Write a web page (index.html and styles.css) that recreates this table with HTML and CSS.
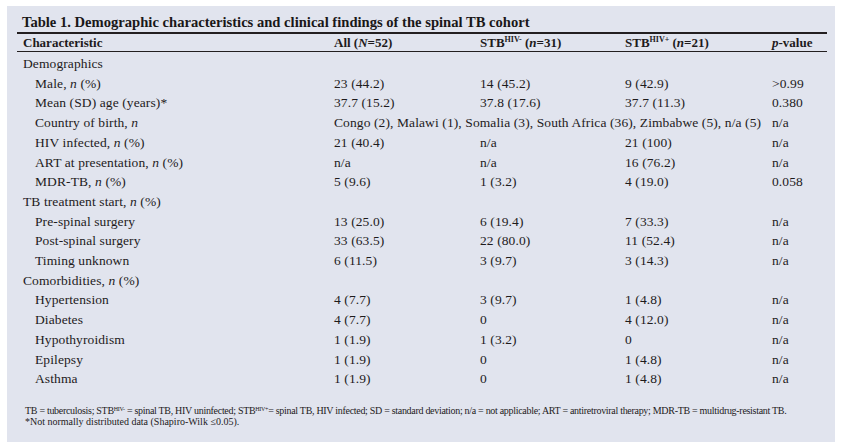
FILE: index.html
```html
<!DOCTYPE html>
<html lang="en">
<head>
<meta charset="utf-8">
<title>Table 1</title>
<link rel="stylesheet" href="styles.css">
</head>
<body>
<div class="panel">
  <div class="title">Table 1. Demographic characteristics and clinical findings of the spinal TB cohort</div>
  <table class="tbl">
    <colgroup>
      <col class="c1"><col class="c2"><col class="c3"><col class="c4"><col class="c5">
    </colgroup>
    <thead>
      <tr>
        <th>Characteristic</th>
        <th>All (<i>N</i>=52)</th>
        <th>STB<sup>HIV-</sup> (<i>n</i>=31)</th>
        <th>STB<sup>HIV+</sup> (<i>n</i>=21)</th>
        <th><i>p</i>-value</th>
      </tr>
    </thead>
    <tbody>
      <tr class="first"><td class="grp">Demographics</td><td></td><td></td><td></td><td></td></tr>
      <tr><td class="sub">Male, <i>n</i> (%)</td><td>23 (44.2)</td><td>14 (45.2)</td><td>9 (42.9)</td><td>&gt;0.99</td></tr>
      <tr><td class="sub">Mean (SD) age (years)*</td><td>37.7 (15.2)</td><td>37.8 (17.6)</td><td>37.7 (11.3)</td><td>0.380</td></tr>
      <tr><td class="sub">Country of birth, <i>n</i></td><td colspan="3">Congo (2), Malawi (1), Somalia (3), South Africa (36), Zimbabwe (5), n/a (5)</td><td>n/a</td></tr>
      <tr><td class="sub">HIV infected, <i>n</i> (%)</td><td>21 (40.4)</td><td>n/a</td><td>21 (100)</td><td>n/a</td></tr>
      <tr><td class="sub">ART at presentation, <i>n</i> (%)</td><td>n/a</td><td>n/a</td><td>16 (76.2)</td><td>n/a</td></tr>
      <tr><td class="sub">MDR-TB, <i>n</i> (%)</td><td>5 (9.6)</td><td>1 (3.2)</td><td>4 (19.0)</td><td>0.058</td></tr>
      <tr><td class="grp">TB treatment start, <i>n</i> (%)</td><td></td><td></td><td></td><td></td></tr>
      <tr><td class="sub">Pre-spinal surgery</td><td>13 (25.0)</td><td>6 (19.4)</td><td>7 (33.3)</td><td>n/a</td></tr>
      <tr><td class="sub">Post-spinal surgery</td><td>33 (63.5)</td><td>22 (80.0)</td><td>11 (52.4)</td><td>n/a</td></tr>
      <tr><td class="sub">Timing unknown</td><td>6 (11.5)</td><td>3 (9.7)</td><td>3 (14.3)</td><td>n/a</td></tr>
      <tr><td class="grp">Comorbidities, <i>n</i> (%)</td><td></td><td></td><td></td><td></td></tr>
      <tr><td class="sub">Hypertension</td><td>4 (7.7)</td><td>3 (9.7)</td><td>1 (4.8)</td><td>n/a</td></tr>
      <tr><td class="sub">Diabetes</td><td>4 (7.7)</td><td>0</td><td>4 (12.0)</td><td>n/a</td></tr>
      <tr><td class="sub">Hypothyroidism</td><td>1 (1.9)</td><td>1 (3.2)</td><td>0</td><td>n/a</td></tr>
      <tr><td class="sub">Epilepsy</td><td>1 (1.9)</td><td>0</td><td>1 (4.8)</td><td>n/a</td></tr>
      <tr><td class="sub">Asthma</td><td>1 (1.9)</td><td>0</td><td>1 (4.8)</td><td>n/a</td></tr>
    </tbody>
  </table>
  <div class="notes">
    <p class="n1">TB = tuberculosis; STB<sup>HIV-</sup> = spinal TB, HIV uninfected; STB<sup>HIV+</sup>= spinal TB, HIV infected; SD = standard deviation; n/a = not applicable; ART = antiretroviral therapy; MDR-TB = multidrug-resistant TB.</p>
    <p class="n2">*Not normally distributed data (Shapiro-Wilk ≤0.05).</p>
  </div>
</div>
</body>
</html>
```
FILE: styles.css
```css
html, body {
  margin: 0;
  padding: 0;
  background: #ffffff;
}
body {
  font-family: "Liberation Serif", "Times New Roman", serif;
  color: #1e1b1c;
}
.panel {
  margin: 6px 0 0 7px;
  width: 828px;
  height: 436px;
  box-sizing: border-box;
  background: #e1e4ee;
  padding: 7px 8px 0 10px;
}
.title {
  font-weight: bold;
  font-size: 14.6px;
  line-height: 19px;
  color: #1a1718;
  padding-left: 5px;
}
.tbl {
  width: 810px;
  border-collapse: collapse;
  table-layout: fixed;
  font-size: 13.5px;
}
.c1 { width: 311px; }
.c2 { width: 146px; }
.c3 { width: 145px; }
.c4 { width: 147px; }
.c5 { width: 61px; }
.tbl thead tr {
  border-top: 2px solid #231f20;
  border-bottom: 1px solid #231f20;
}
.tbl th {
  text-align: left;
  font-weight: bold;
  font-size: 13px;
  height: 17px;
  line-height: 17px;
  padding: 0 0 0 6px;
  white-space: nowrap;
}
.tbl th i { font-style: italic; }
.tbl sup {
  font-size: 8px;
  line-height: 0;
  vertical-align: 5px;
}
.tbl td {
  height: 19.7px;
  line-height: 19.7px;
  padding: 0 0 0 6px;
  white-space: nowrap;
  vertical-align: middle;
  letter-spacing: 0.1px;
}
.tbl tr.first td {
  padding-top: 2px;
}
.tbl td.sub {
  padding-left: 18px;
}
.notes {
  margin-top: 16px;
  padding-left: 8px;
}
.notes p {
  margin: 0;
  font-size: 10px;
  line-height: 11.5px;
  white-space: nowrap;
}
.notes .n1 {
  letter-spacing: -0.3px;
}
.notes sup {
  font-size: 6px;
  line-height: 0;
  vertical-align: 3px;
}
```
